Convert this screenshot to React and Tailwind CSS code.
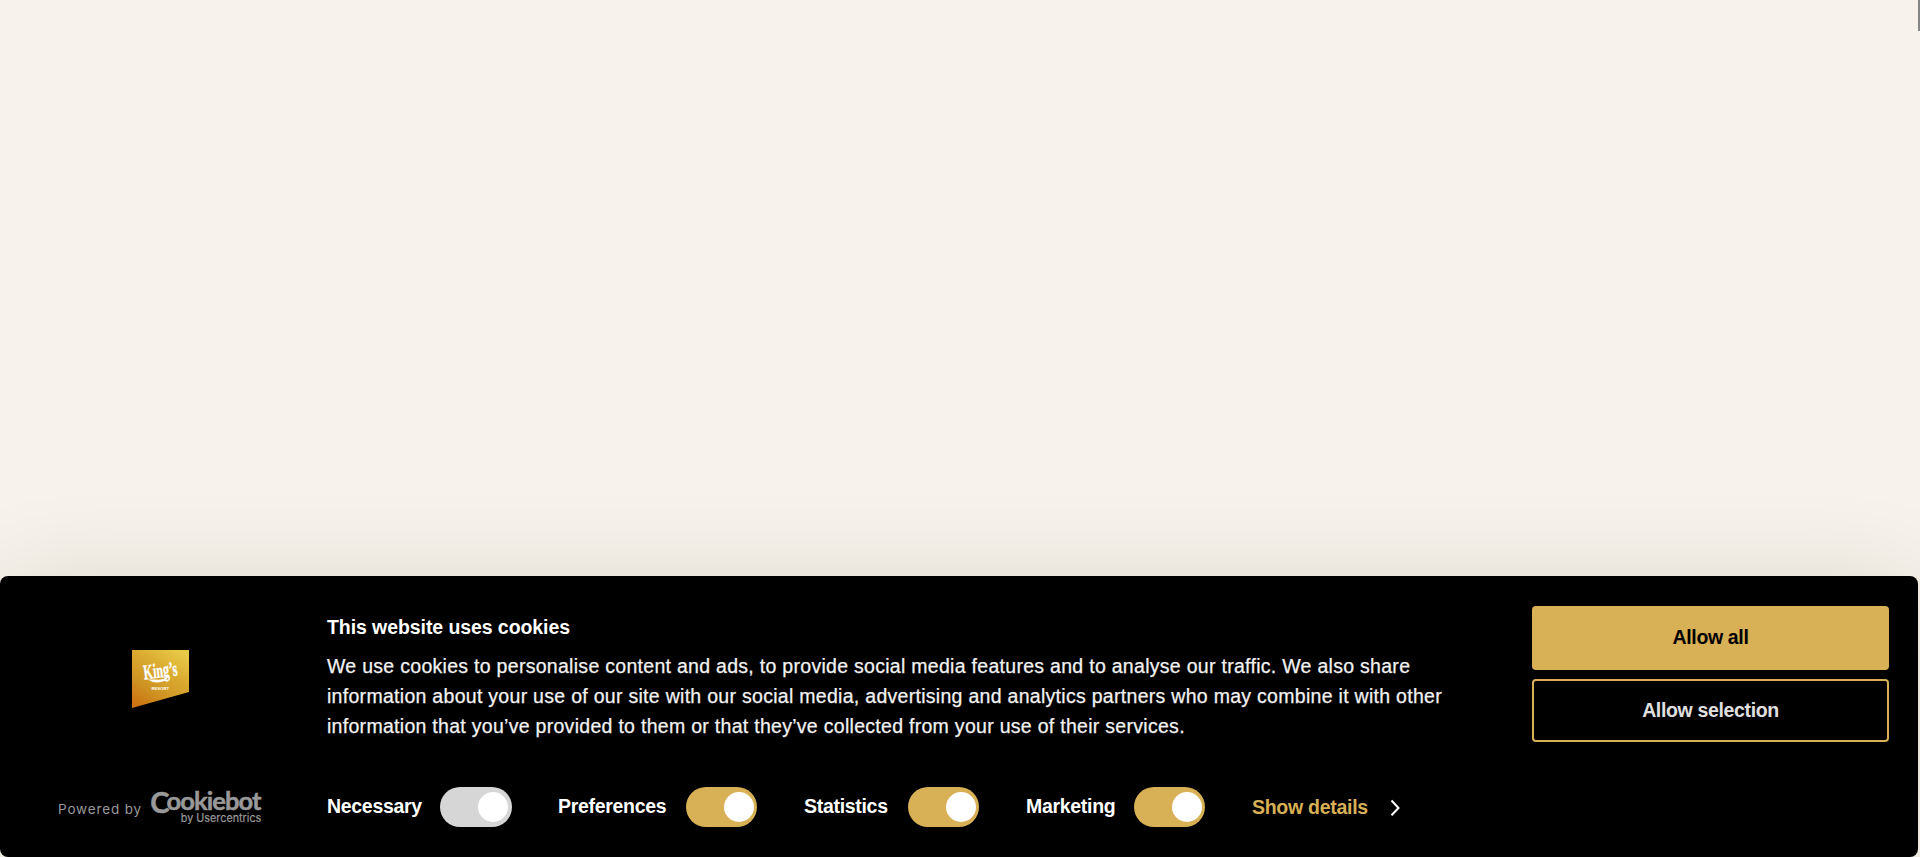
const toggles = [
  { label: 'Necessary', locked: true, width: 'w-[231px]', text: 'w-[113px]' },
  { label: 'Preferences', width: 'w-[246px]', text: 'w-[128px]' },
  { label: 'Statistics', width: 'w-[222px]', text: 'w-[104px]' },
  { label: 'Marketing', width: 'w-[226px]', text: 'w-[108px]' },
];

function Toggle({ label, locked, width, text }) {
  return (
    <div className={`flex shrink-0 items-center ${width}`}>
      <span className={`shrink-0 pb-[2px] text-[19.5px] leading-[30px] font-bold tracking-[-0.3px] ${text}`}>{label}</span>
      <span className={`flex h-10 shrink-0 items-center justify-end rounded-full ${locked ? 'w-[72px] bg-[#d6d6d6] pr-[4.5px]' : 'w-[71px] bg-[#d8b055] pr-[3px]'}`}>
        <span className="size-[30px] rounded-full bg-white" />
      </span>
    </div>
  );
}

function KingsLogo() {
  return (
    <svg className="block overflow-visible" width="57" height="58" viewBox="0 0 57 58">
      <defs>
        <linearGradient id="gold" x1="0.8" y1="0" x2="0.2" y2="1">
          <stop offset="0" stopColor="#e9ca48" />
          <stop offset="0.35" stopColor="#daab30" />
          <stop offset="0.7" stopColor="#cf9424" />
          <stop offset="1" stopColor="#cb7411" />
        </linearGradient>
      </defs>
      <path d="M0 0H57V42L0 58Z" fill="url(#gold)" />
      <g transform="rotate(-7 28 22)" fill="#fff">
        <text x="11.5" y="27.5" fontSize="21" fontWeight="bold" stroke="#fff" strokeWidth="0.4" fontFamily="Liberation Serif, serif" textLength="34" lengthAdjust="spacingAndGlyphs">King’s</text>
        <path d="M15 28Q22 34.5 33 31L35 28Q29 31 23 29Z" />
      </g>
      <text x="19.5" y="40" fontSize="4.2" fontWeight="bold" fill="#fff" fontFamily="Liberation Sans, sans-serif" textLength="17.5" lengthAdjust="spacing">RESORT</text>
    </svg>
  );
}

function CookiebotLogo() {
  return (
    <svg className="block overflow-visible" width="112" height="34" viewBox="0 0 112 34" fill="#999" stroke="#999">
      <text y="19.3" fontFamily="Lato, sans-serif" fontWeight="bold" strokeWidth="0.5">
        <tspan x="-0.8" y="21.6" fontSize="29">C</tspan>
        <tspan x="15.6" y="19.3" fontSize="25.5" textLength="95" lengthAdjust="spacing">ookiebot</tspan>
      </text>
      <text x="29.8" y="30.6" fontSize="11.2" strokeWidth="0.2" fontFamily="Inter, sans-serif" textLength="80.5" lengthAdjust="spacingAndGlyphs">by Usercentrics</text>
    </svg>
  );
}

export default function App() {
  return (
    <div className="flex h-[857px] overflow-hidden bg-[#f7f2eb] font-['Liberation_Sans',Arial,sans-serif] text-white">
      <div className="flex w-[1918px] shrink-0 flex-col justify-end">
        <section className="flex h-[281px] rounded-lg bg-black shadow-[0_8px_100px_rgba(20,40,10,0.12)]">
          <aside className="flex w-[327px] shrink-0 flex-col pt-[74px]">
            <div className="pl-[132px]"><KingsLogo /></div>
            <div className="flex items-start pt-[83px] pl-[58px]">
              <span className="w-[93px] pt-[8px] font-[Inter,sans-serif] text-[13.5px] leading-[20px] tracking-[0.85px] whitespace-nowrap text-[#999]">Powered by</span>
              <CookiebotLogo />
            </div>
          </aside>
          <main className="w-[1205px] shrink-0 pt-[36px]">
            <h2 className="text-[19.5px] leading-[30px] font-bold tracking-[-0.08px]">This website uses cookies</h2>
            <p className="mt-[9px] text-[19.5px] leading-[30px] tracking-[0.29px] whitespace-nowrap text-[#f2f2f2] [-webkit-text-stroke:0.25px_#f2f2f2]">
              We use cookies to personalise content and ads, to provide social media features and to analyse our traffic. We also share<br />
              information about your use of our site with our social media, advertising and analytics partners who may combine it with other<br />
              information that you’ve provided to them or that they’ve collected from your use of their services.
            </p>
            <div className="mt-[46px] flex h-10 items-center">
              {toggles.map((t) => <Toggle key={t.label} {...t} />)}
              <a className="flex items-center text-[19.5px] leading-[30px] font-bold tracking-[-0.28px] whitespace-nowrap text-[#d8b055]">
                <span className="w-[138px]">Show details</span>
                <svg width="12" height="18" viewBox="0 0 12 18" fill="none" stroke="#fff" strokeWidth="2"><path d="M1.5 2.5L8.5 10L1.5 17.3" /></svg>
              </a>
            </div>
          </main>
          <div className="flex w-[357px] flex-col gap-[9px] pt-[30px] text-[19.5px] font-bold tracking-[-0.35px]">
            <button className="h-16 rounded bg-[#d8b055] pb-px text-black">Allow all</button>
            <button className="h-[63px] rounded border-2 border-[#d8b055] text-[#e0e0e0]">Allow selection</button>
          </div>
        </section>
      </div>
      <div className="h-[31px] w-[2px] bg-[#858585]" />
    </div>
  );
}
